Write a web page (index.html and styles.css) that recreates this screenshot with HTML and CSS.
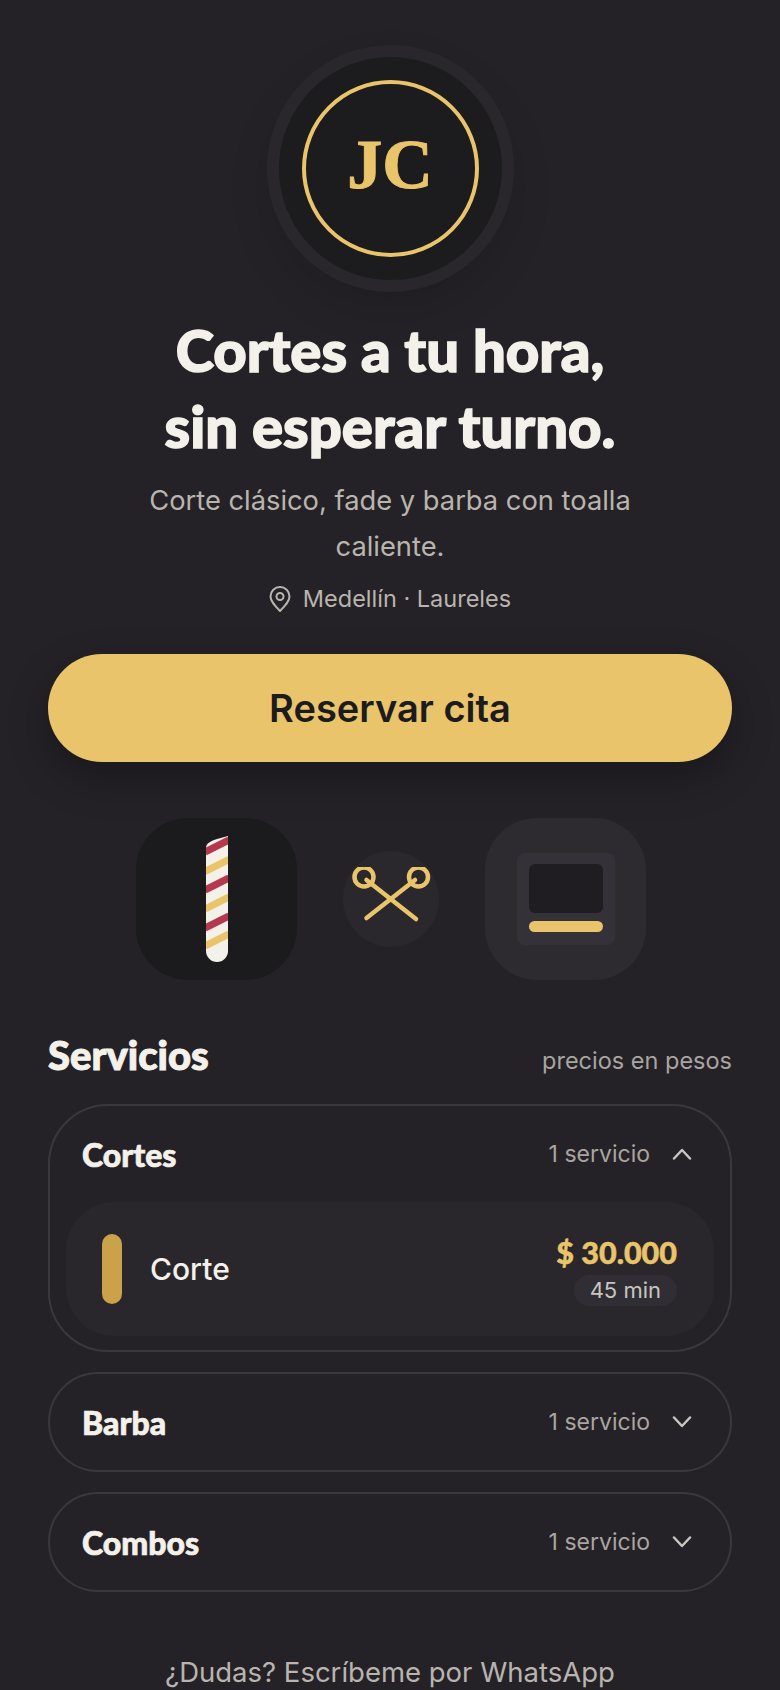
FILE: index.html
```html
<!DOCTYPE html>
<html lang="es">
<head>
    <meta charset="UTF-8">
    <meta name="viewport" content="width=device-width, initial-scale=1.0">
    <title>JC Barbería</title>
    <link rel="stylesheet" href="styles.css">
</head>
<body>
    <main class="page">
        <header class="hero">
            <div class="logo">
                <div class="logo-ring">JC</div>
            </div>
            <h1>Cortes a tu hora,<br>sin esperar turno.</h1>
            <p class="lead">Corte clásico, fade y barba con toalla caliente.</p>
            <p class="place">
                <svg class="pin" viewBox="0 0 22 26" fill="none" stroke="currentColor" stroke-width="2">
                    <path d="M11 25C6 20 1.5 15.5 1.5 10.500a9.500 9.500 0 0 1 19 0C20.500 15.500 16 20 11 25z" stroke-linejoin="round"/>
                    <circle cx="11" cy="10.500" r="3.500"/>
                </svg>
                Medellín · Laureles
            </p>
            <a class="button" href="#">Reservar cita</a>
        </header>

        <section class="gallery">
            <div class="tile tile-dark">
                <svg width="24" height="126" viewBox="0 0 24 126">
                    <defs>
                        <clipPath id="pole">
                            <path d="M1 12C1 7 6 5 12 3L23 0V115a11 11 0 0 1-22 0z"/>
                        </clipPath>
                    </defs>
                    <g clip-path="url(#pole)">
                        <rect width="24" height="126" fill="#f4f1ea"/>
                        <g fill="none" stroke-width="7">
                            <path d="M0 16L24 4" stroke="#b5384f"/>
                            <path d="M0 35.500L24 23.500" stroke="#e9c46a"/>
                            <path d="M0 54L24 42" stroke="#b5384f"/>
                            <path d="M0 73L24 61" stroke="#e9c46a"/>
                            <path d="M0 92L24 80" stroke="#b5384f"/>
                            <path d="M0 110L24 98" stroke="#e9c46a"/>
                        </g>
                    </g>
                </svg>
            </div>
            <div class="tile-round">
                <svg width="80" height="64" viewBox="0 0 80 64" fill="none" stroke="#e9c46a" stroke-width="4.500" stroke-linecap="round">
                    <circle cx="13" cy="10" r="9.500"/>
                    <circle cx="67.500" cy="10" r="9.500"/>
                    <path d="M15.500 13L65 52"/>
                    <path d="M64 13L15.500 51"/>
                </svg>
            </div>
            <div class="tile tile-light">
                <div class="screen">
                    <div class="screen-top"></div>
                    <div class="screen-bar"></div>
                </div>
            </div>
        </section>

        <section class="services">
            <div class="services-head">
                <h2>Servicios</h2>
                <span>precios en pesos</span>
            </div>

            <div class="group group-open">
                <div class="group-head">
                    <h3>Cortes</h3>
                    <span class="count">1 servicio</span>
                    <svg class="chevron" viewBox="0 0 20 12"><path d="M2 10.500L10 2l8 8.500"/></svg>
                </div>
                <div class="item">
                    <div class="item-bar"></div>
                    <div class="item-name">Corte</div>
                    <div class="item-info">
                        <div class="price">$ 30.000</div>
                        <div class="time">45 min</div>
                    </div>
                </div>
            </div>

            <div class="group">
                <div class="group-head">
                    <h3>Barba</h3>
                    <span class="count">1 servicio</span>
                    <svg class="chevron" viewBox="0 0 20 12"><path d="M2 1.500L10 10l8-8.500"/></svg>
                </div>
            </div>

            <div class="group">
                <div class="group-head">
                    <h3>Combos</h3>
                    <span class="count">1 servicio</span>
                    <svg class="chevron" viewBox="0 0 20 12"><path d="M2 1.500L10 10l8-8.500"/></svg>
                </div>
            </div>
        </section>

        <p class="help">¿Dudas? Escríbeme por WhatsApp</p>
    </main>
</body>
</html>
```

FILE: styles.css
```css
html, body {
    height: 100%;
    overflow: hidden;
}
body {
    margin: 0;
    background-color: #242227;
    color: #f4f1ea;
    font-family: Inter, "Open Sans", sans-serif;
}
h1, h2, h3, p {
    margin: 0;
}
.page {
    padding: 45px 48px 0;
}
.hero {
    display: flex;
    flex-direction: column;
    align-items: center;
    text-align: center;
}
.logo {
    width: 247px;
    height: 247px;
    box-sizing: border-box;
    display: flex;
    align-items: center;
    justify-content: center;
    border: 12px solid #29272c;
    border-radius: 50%;
    background-color: #1c1b1e;
    box-shadow: 0 20px 40px rgba(0, 0, 0, 0.12);
}
.logo-ring {
    width: 177px;
    height: 177px;
    box-sizing: border-box;
    display: flex;
    align-items: center;
    justify-content: center;
    padding-bottom: 8px;
    border: 4px solid #e9c46a;
    border-radius: 50%;
    color: #e9c46a;
    font-family: "Liberation Serif", serif;
    font-size: 70px;
    font-weight: bold;
    -webkit-text-stroke: 1px #e9c46a;
}
h1 {
    margin-top: 20px;
    font-family: Lato, sans-serif;
    font-size: 58px;
    font-weight: 900;
    line-height: 76px;
    -webkit-text-stroke: 1.5px #f4f1ea;
}
.lead {
    width: 520px;
    margin-top: 14px;
    color: #b9b5ae;
    font-size: 27.300px;
    line-height: 46px;
}
.place {
    display: flex;
    align-items: center;
    gap: 12px;
    margin-top: 7px;
    color: #b9b5ae;
    font-size: 23.500px;
    line-height: 44px;
}
.pin {
    width: 22px;
    height: 26px;
}
.button {
    align-self: stretch;
    margin-top: 33px;
    border-radius: 54px;
    background-color: #e9c46a;
    box-shadow: 0 16px 40px rgba(0, 0, 0, 0.3);
    color: #1c1b1e;
    font-size: 38px;
    font-weight: 600;
    line-height: 108px;
    text-decoration: none;
}
.gallery {
    display: flex;
    align-items: center;
    justify-content: center;
    gap: 46px;
    margin-top: 56px;
    padding-left: 2px;
}
.tile {
    width: 161px;
    height: 162px;
    display: flex;
    align-items: center;
    justify-content: center;
    border-radius: 52px;
}
.tile-dark {
    background-color: #1b1a1d;
}
.tile-light {
    background-color: #2d2b30;
}
.tile-round {
    width: 96px;
    height: 96px;
    display: flex;
    align-items: center;
    justify-content: center;
    border-radius: 50%;
    background-color: #2a282d;
}
.screen {
    width: 98px;
    height: 92px;
    box-sizing: border-box;
    display: flex;
    flex-direction: column;
    gap: 8px;
    padding: 11px 12px;
    border-radius: 8px;
    background-color: #343238;
}
.screen-top {
    height: 49px;
    border-radius: 6px;
    background-color: #1f1d21;
}
.screen-bar {
    height: 11px;
    border-radius: 6px;
    background-color: #e9c46a;
}
.services {
    margin-top: 50px;
}
.services-head {
    display: flex;
    align-items: center;
    justify-content: space-between;
    margin-bottom: 24px;
}
h2 {
    font-family: Lato, sans-serif;
    font-size: 40px;
    font-weight: 900;
    line-height: 50px;
    -webkit-text-stroke: 1px #f4f1ea;
}
.services-head span {
    padding-top: 10px;
    color: #a9a5a0;
    font-size: 23.500px;
}
.group {
    margin-bottom: 20px;
    padding: 0 16px;
    border: 2px solid #3a383d;
    border-radius: 50px;
}
.group-open {
    border-radius: 60px;
    padding-bottom: 14px;
}
.group-head {
    height: 96px;
    display: flex;
    align-items: center;
    padding: 0 22px 0 16px;
}
h3 {
    flex: 1;
    font-family: Lato, sans-serif;
    font-size: 32px;
    font-weight: 900;
    -webkit-text-stroke: 0.7px #f4f1ea;
}
.count {
    color: #a9a5a0;
    font-size: 23px;
}
.chevron {
    width: 20px;
    height: 12px;
    margin-left: 22px;
    fill: none;
    stroke: #c8c5c0;
    stroke-width: 2.500;
    stroke-linecap: round;
    stroke-linejoin: round;
}
.item {
    height: 134px;
    display: flex;
    align-items: center;
    padding: 0 37px 0 36px;
    border-radius: 48px;
    background-color: #29272c;
}
.item-bar {
    width: 20px;
    height: 70px;
    border-radius: 10px;
    background-color: #c9a24a;
}
.item-name {
    flex: 1;
    margin-left: 28px;
    font-size: 30px;
    font-weight: 500;
}
.item-info {
    display: flex;
    flex-direction: column;
    align-items: flex-end;
    gap: 4px;
}
.price {
    color: #e9c46a;
    font-family: Lato, sans-serif;
    font-size: 30.500px;
    font-weight: 900;
    line-height: 38px;
    -webkit-text-stroke: 0.5px #e9c46a;
}
.time {
    padding: 0 16px;
    border-radius: 16px;
    background-color: #302e34;
    color: #c8c5c0;
    font-size: 22px;
    line-height: 31px;
}
.help {
    margin-top: 63px;
    color: #b9b5ae;
    font-size: 27.500px;
    text-align: center;
}
```
